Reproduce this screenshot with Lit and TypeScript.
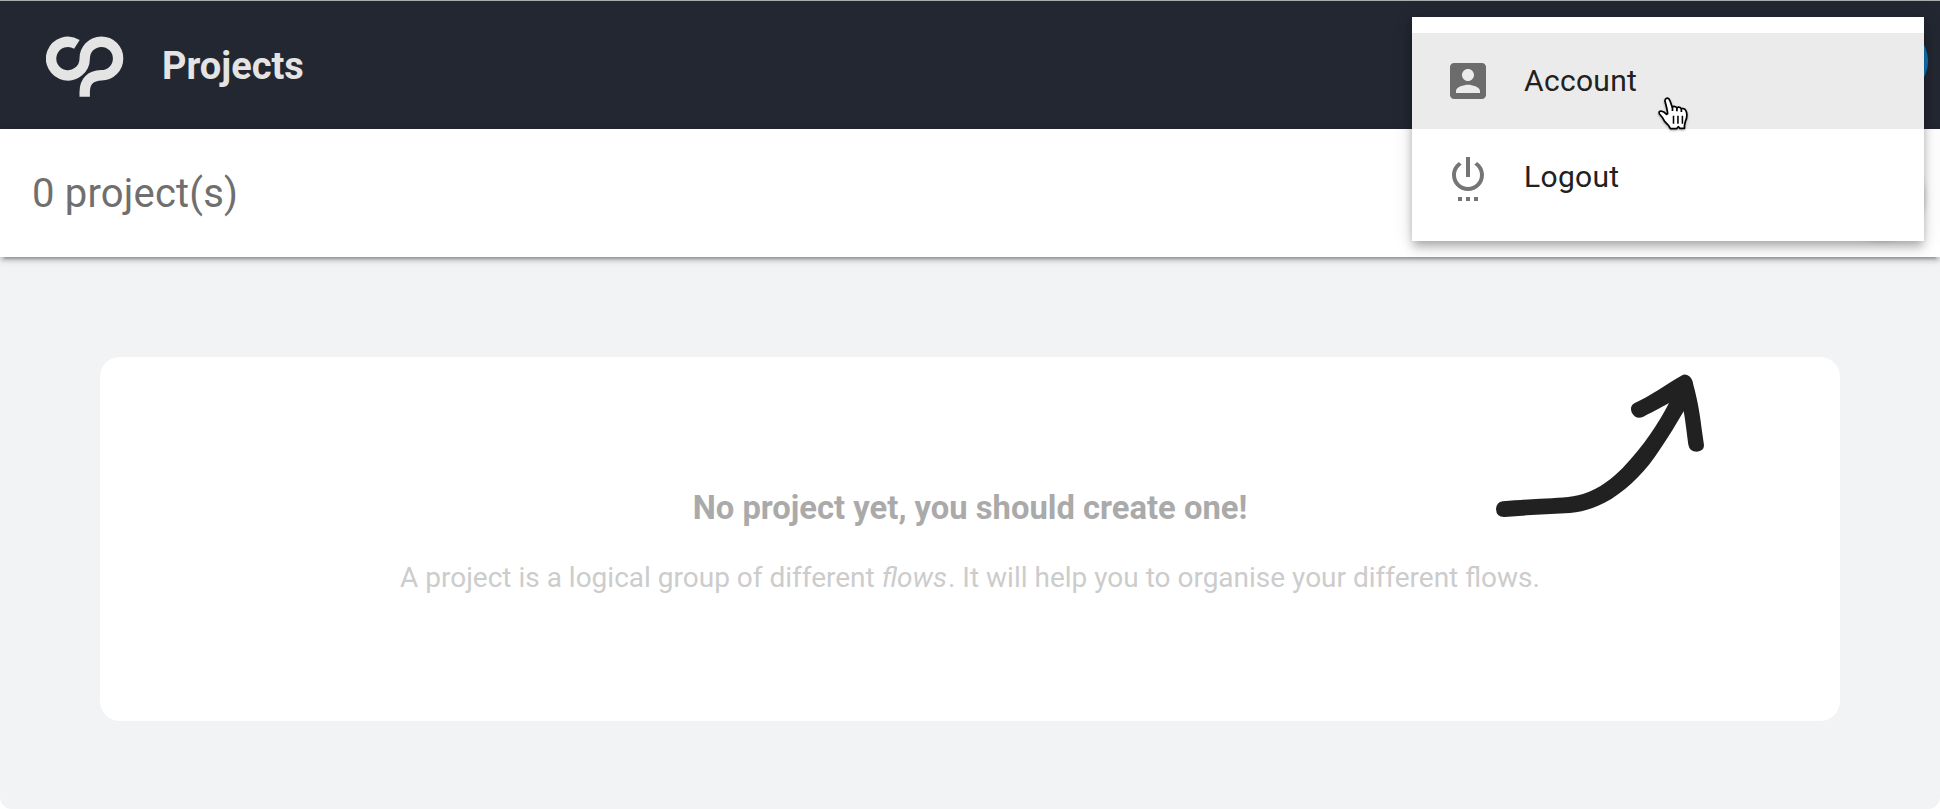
import { LitElement, html, css } from "lit";
import { customElement } from "lit/decorators.js";

@customElement("app-root")
class AppRoot extends LitElement {
  static styles = css`
    :host {
      display: block;
      position: relative;
      width: 1940px;
      height: 809px;
      overflow: hidden;
      background: #fff;
      font-family: Roboto, sans-serif;
      font-size: 28px;
      color: #212121;
    }
    * { box-sizing: border-box; }
    svg { display: block; flex: none; }
    .page {
      display: flex;
      flex-direction: column;
      height: 809px;
      background: #f2f3f5;
      border-radius: 0 0 12px 12px;
      overflow: hidden;
    }
    .header {
      display: flex;
      align-items: center;
      flex: none;
      height: 129px;
      padding: 0 12px 0 46px;
      border-top: 1px solid #a9abae;
      background: #232731;
    }
    .title {
      flex: 1;
      margin: 0;
      padding: 2px 0 0 38px;
      font-size: 38px;
      line-height: 46px;
      font-weight: 700;
      color: #e4e4e4;
    }
    .logo { margin-top: 2px; }
    .avatar {
      width: 72px;
      height: 72px;
      margin-bottom: 8px;
      border-radius: 50%;
      background: #1276b4;
    }
    .toolbar {
      display: flex;
      align-items: center;
      justify-content: space-between;
      flex: none;
      height: 128px;
      padding: 0 18px 0 32px;
      background: #fff;
      box-shadow: 0 6px 2px -4px rgba(0, 0, 0, 0.2), 0 4px 4px 0 rgba(0, 0, 0, 0.14),
        0 2px 10px 0 rgba(0, 0, 0, 0.12);
    }
    .count {
      padding-top: 2px;
      font-size: 40px;
      line-height: 48px;
      letter-spacing: 0.18px;
      color: #6f6f6f;
    }
    .add {
      width: 80px;
      height: 80px;
      border-radius: 50%;
      background: #fff;
      box-shadow: 0 4px 8px rgba(0, 0, 0, 0.4);
    }
    .content { padding: 100px; }
    .card {
      display: flex;
      flex-direction: column;
      align-items: center;
      gap: 35px;
      height: 364px;
      padding-top: 132px;
      border-radius: 20px;
      background: #fff;
      position: relative;
    }
    .heading {
      margin: 0;
      font-size: 32.76px;
      line-height: 38px;
      font-weight: 700;
      color: #aaa;
    }
    .hint {
      margin: 0;
      line-height: 32px;
      color: #ccc;
    }
    .hint em { margin-right: 1px; }
    .arrow { position: absolute; top: 3px; left: 1380px; }
    .menu {
      position: absolute;
      top: 17px;
      left: 1412px;
      width: 512px;
      padding: 16px 0;
      background: #fff;
      box-shadow: 0 4px 8px -2px rgba(0, 0, 0, 0.2), 0 8px 10px 0 rgba(0, 0, 0, 0.14),
        0 2px 20px 0 rgba(0, 0, 0, 0.12);
    }
    .item {
      display: flex;
      align-items: center;
      gap: 32px;
      height: 96px;
      padding: 0 32px;
      font-size: 30px;
      letter-spacing: 0.32px;
    }
    .label { padding-bottom: 2px; }
    .item svg { fill: rgba(0, 0, 0, 0.54); }
    .active { background: #ebebeb; }
    .cursor { position: absolute; top: 95px; left: 1655px; }
    .hand { filter: drop-shadow(0 3px 3px rgba(0, 0, 0, 0.35)); }
  `;

  render() {
    return html`
      <div class="page">
        <header class="header">
          <svg class="logo" width="78" height="62" viewBox="46 35 78 62">
            <path
              d="M76.9 44.4A16.8 16.8 0 1 0 84.7 58.7A16.7 16.8 0 1 1 101.4 75.3Q84.7 76 84.7 92V96.8"
              fill="none" stroke="#e4e4e4" stroke-width="10.4" />
          </svg>
          <h1 class="title">Projects</h1>
          <div class="avatar"></div>
        </header>
        <div class="toolbar">
          <span class="count">0 project(s)</span>
          <div class="add"></div>
        </div>
        <main class="content">
          <section class="card">
            <h3 class="heading">No project yet, you should create one!</h3>
            <p class="hint">A project is a logical group of different <em>flows</em>. It will help you to organise your different flows.</p>
            <svg class="arrow" width="240" height="170" viewBox="0 0 720 510">
              <path fill="#212121" d="M68 424C110 421 140 418 180 416C230 414 270 413 309 402C360 386 400 352 428 324C495 254 535 190 567 129C540 144 510 160 490 170Q476 176 466 170Q452 160 453 144Q454 134 466 128C510 108 560 72 604 47Q616 39 628 49Q637 56 640 74C654 125 661 170 666 214L672 256Q672 274 650 275Q629 275 625 254C620 218 616 180 611 154C590 190 565 232 537 272C500 330 450 380 395 416C350 442 315 455 270 459L140 466L74 471Q49 472 48 447Q50 426 68 424Z" />
            </svg>
          </section>
        </main>
      </div>
      <nav class="menu">
        <div class="item active">
          <svg width="48" height="48" viewBox="0 0 24 24">
            <path d="M3 5v14c0 1.100.89 2 2 2h14c1.100 0 2-.9 2-2V5c0-1.100-.9-2-2-2H5c-1.110 0-2 .9-2 2zm12 4c0 1.660-1.340 3-3 3s-3-1.340-3-3 1.340-3 3-3 3 1.340 3 3zm-9 8c0-2 4-3.100 6-3.100s6 1.100 6 3.100v1H6v-1z" />
          </svg>
          <span class="label">Account</span>
        </div>
        <div class="item">
          <svg width="48" height="48" viewBox="0 0 24 24">
            <path d="M7 24h2v-2H7v2zm4 0h2v-2h-2v2zm2-22h-2v10h2V2zm3.560 2.440l-1.450 1.450C16.840 6.940 18 8.830 18 11c0 3.310-2.690 6-6 6s-6-2.690-6-6c0-2.170 1.160-4.060 2.880-5.120L7.440 4.440C5.360 5.880 4 8.280 4 11c0 4.420 3.580 8 8 8s8-3.580 8-8c0-2.720-1.360-5.120-3.440-6.560zM15 24h2v-2h-2v2z" />
          </svg>
          <span class="label">Logout</span>
        </div>
      </nav>
      <svg class="cursor" width="37" height="42" viewBox="0 0 108 126" preserveAspectRatio="none">
        <path
          class="hand"
          d="M34 10Q40 8 44 18L50 36Q56 31 64 38Q71 33 77 41Q88 38 92 52Q95 66 89 78L86 91V100H73L68 95L63 101H45Q40 90 28 79Q22 66 13 57Q10 49 17 48Q26 49 34 58L37 56Q36 44 29 18Q29 12 34 10Z"
          fill="#fff" stroke="#000" stroke-width="5" stroke-linejoin="round" />
        <path d="M51 35V48M64 38V49M77 41V51" stroke="#000" stroke-width="5" />
        <path d="M54 62V86M67 62V86M80 62V86" stroke="#000" stroke-width="4.500" />
      </svg>
    `;
  }
}
